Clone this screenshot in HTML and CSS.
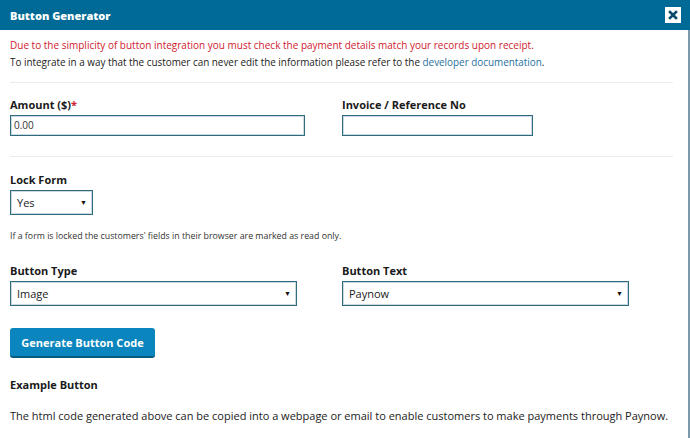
FILE: index.html
```html
<!DOCTYPE html>
<html>
<head>
<meta charset="utf-8">
<link rel="stylesheet" href="styles.css">
</head>
<body>
<div class="modal">
  <div class="header">
    <span class="title">Button Generator</span>
    <span class="close"><svg width="10" height="10" viewBox="0 0 10 10"><path d="M2 2 L8 8 M8 2 L2 8" stroke="#0a4a6e" stroke-width="2.6" stroke-linecap="square"/></svg></span>
  </div>
  <div class="body">
    <p class="warn">Due to the simplicity of button integration you must check the payment details match your records upon receipt.</p>
    <p class="note">To integrate in a way that the customer can never edit the information please refer to the <a href="#">developer documentation</a>.</p>
    <hr class="divider">
    <div class="row">
      <div class="field">
        <label>Amount ($)<span class="req">*</span></label>
        <div class="input wide">0.00</div>
      </div>
      <div class="field">
        <label>Invoice / Reference No</label>
        <div class="input mid"></div>
      </div>
    </div>
    <hr class="divider second">
    <div class="field">
      <label>Lock Form</label>
      <div class="select small"><span>Yes</span><span class="arrow">▼</span></div>
    </div>
    <p class="help">If a form is locked the customers' fields in their browser are marked as read only.</p>
    <div class="row">
      <div class="field">
        <label>Button Type</label>
        <div class="select large"><span>Image</span><span class="arrow">▼</span></div>
      </div>
      <div class="field">
        <label>Button Text</label>
        <div class="select large"><span>Paynow</span><span class="arrow">▼</span></div>
      </div>
    </div>
    <button class="btn">Generate Button Code</button>
    <h4 class="example">Example Button</h4>
    <p class="desc">The html code generated above can be copied into a webpage or email to enable customers to make payments through Paynow.</p>
  </div>
</div>
</body>
</html>
```

FILE: styles.css
```css
* { box-sizing: border-box; }
html, body { margin: 0; padding: 0; background: #fff; }
body {
  font-family: "Open Sans", "Noto Sans", sans-serif;
  font-size: 11px;
  color: #222;
  width: 690px;
  height: 438px;
  overflow: hidden;
}
.modal {
  width: 690px;
  height: 438px;
  border-right: 2px solid #7c98ab;
  background: #fff;
}
.header {
  height: 30px;
  background: #006a96;
  display: flex;
  align-items: center;
  justify-content: space-between;
  padding: 0 8px 0 10px;
  margin-right: -2px;
}
.title {
  color: #fff;
  font-weight: 800;
  font-size: 11px;
}
.close {
  width: 16px;
  height: 16px;
  background: #fff;
  display: flex;
  align-items: center;
  justify-content: center;
  margin-right: 1px;
}
.body {
  padding: 7px 15px 0 10px;
}
p { margin: 0; }
.warn { color: #d0202d; font-size: 10px; line-height: 17px; }
.note { color: #222; font-size: 9.9px; line-height: 17px; }
.note a { color: #1f6f9e; text-decoration: none; }
.divider {
  border: 0;
  border-top: 1px solid #ececec;
  margin: 11px 0 14px;
}
.divider.second { margin: 20px 0 15px; }
.row {
  display: grid;
  grid-template-columns: 332px 1fr;
}
.field label {
  display: block;
  font-weight: 700;
  font-size: 11px;
  line-height: 15px;
  margin-bottom: 3px;
  color: #1a1a1a;
}
.req { color: #d0202d; }
.input {
  height: 21px;
  border: 1px solid #2f6a7e;
  box-shadow: inset 0 0 0 1px rgba(47,106,126,0.25);
  padding: 0 3px;
  line-height: 19px;
  font-size: 10px;
  color: #333;
}
.input.wide { width: 295px; }
.input.mid { width: 191px; }
.select {
  height: 25px;
  border: 1px solid #2f6a7e;
  box-shadow: inset 0 0 0 1px rgba(47,106,126,0.25);
  display: flex;
  align-items: center;
  justify-content: space-between;
  padding: 0 5px 0 6px;
  font-size: 11px;
  color: #222;
}
.select.small { width: 83px; }
.select.large { width: 287px; }
.arrow { font-size: 7px; color: #111; }
.help {
  font-size: 8.8px;
  line-height: 12px;
  color: #333;
  margin: 15px 0 21px;
}
.btn {
  display: block;
  margin-top: 22px;
  width: 145px;
  height: 30px;
  border: 0;
  border-radius: 3px;
  border-bottom: 2px solid #065b80;
  background: #0a85bd;
  color: #fff;
  font-family: inherit;
  font-weight: 700;
  font-size: 11px;
  padding: 0;
}
.example {
  margin: 19px 0 0;
  font-size: 11px;
  line-height: 15px;
  font-weight: 700;
  color: #1a1a1a;
}
.desc {
  margin-top: 16px;
  font-size: 11px;
  line-height: 15px;
  color: #222;
}
```
